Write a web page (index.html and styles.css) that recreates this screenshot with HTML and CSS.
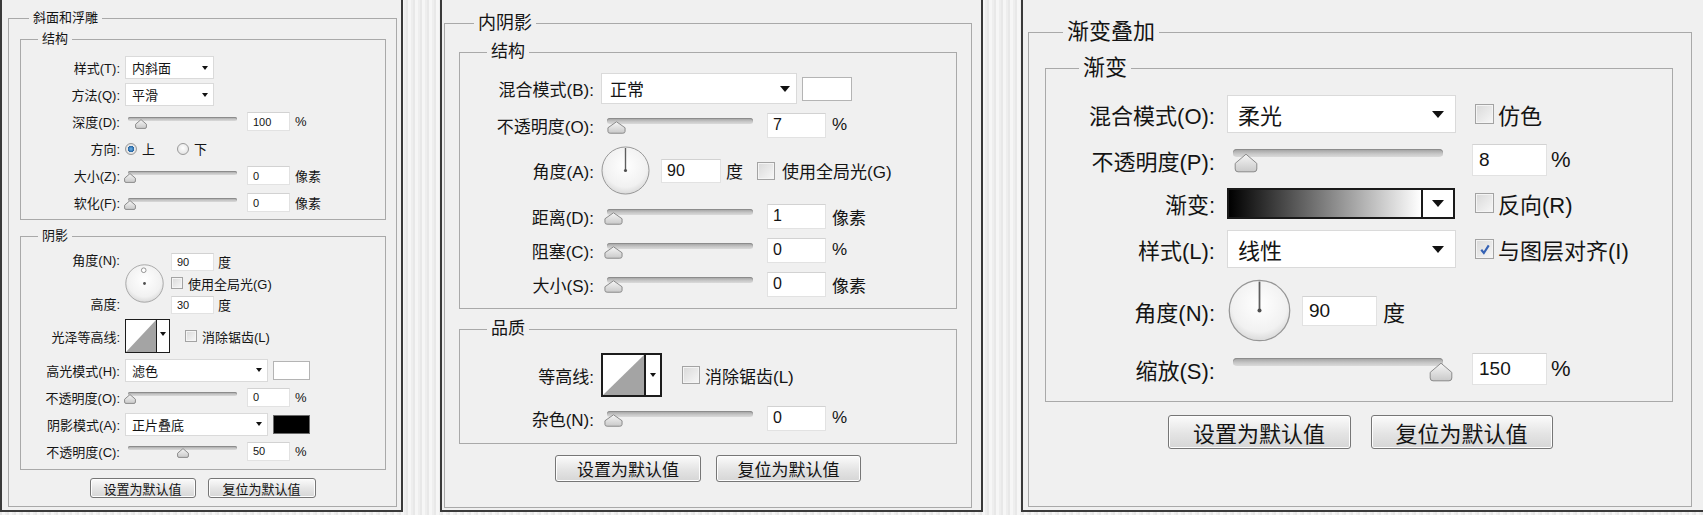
FILE: index.html
```html
<!DOCTYPE html>
<html lang="zh-CN">
  <head>
    <meta charset="UTF-8" />
    <title>图层样式</title>
    <link rel="stylesheet" href="styles.css">
  </head>
  <body>
    <div class="screen">

      <!-- 斜面和浮雕 -->
      <section class="panel p1">
        <fieldset class="group outer">
          <legend>斜面和浮雕</legend>
          <fieldset class="group inner">
            <legend>结构</legend>
            <div class="rows">
              <div class="row">
                <span class="lbl">样式(T):</span>
                <div class="select"><span>内斜面</span><i class="caret"></i></div>
              </div>
              <div class="row">
                <span class="lbl">方法(Q):</span>
                <div class="select"><span>平滑</span><i class="caret"></i></div>
              </div>
              <div class="row">
                <span class="lbl">深度(D):</span>
                <div class="slider"><div class="track"></div><svg class="thumb" style="left:11px" viewBox="0 0 12 10" preserveAspectRatio="none"><path d="M6 .6 11.4 5.2V8a1.4 1.4 0 0 1-1.4 1.4H2A1.4 1.4 0 0 1 .6 8V5.2Z"/></svg></div>
                <span class="num">100</span><span class="unit">%</span>
              </div>
              <div class="row">
                <span class="lbl">方向:</span>
                <span class="radio on"></span><span class="opt">上</span>
                <span class="radio"></span><span class="opt">下</span>
              </div>
              <div class="row">
                <span class="lbl">大小(Z):</span>
                <div class="slider"><div class="track"></div><svg class="thumb" style="left:0" viewBox="0 0 12 10" preserveAspectRatio="none"><path d="M6 .6 11.4 5.2V8a1.4 1.4 0 0 1-1.4 1.4H2A1.4 1.4 0 0 1 .6 8V5.2Z"/></svg></div>
                <span class="num">0</span><span class="unit">像素</span>
              </div>
              <div class="row">
                <span class="lbl">软化(F):</span>
                <div class="slider"><div class="track"></div><svg class="thumb" style="left:0" viewBox="0 0 12 10" preserveAspectRatio="none"><path d="M6 .6 11.4 5.2V8a1.4 1.4 0 0 1-1.4 1.4H2A1.4 1.4 0 0 1 .6 8V5.2Z"/></svg></div>
                <span class="num">0</span><span class="unit">像素</span>
              </div>
            </div>
          </fieldset>

          <fieldset class="group inner shadow">
            <legend>阴影</legend>
            <div class="rows">
              <div class="row angle">
                <div class="lbl stack"><span>角度(N):</span><span>高度:</span></div>
                <svg class="dial" viewBox="0 0 50 50"><circle cx="25" cy="25" r="24"/><circle class="ring" cx="24" cy="8" r="3"/><circle class="dot" cx="25" cy="25" r="1.8"/></svg>
                <div class="stack side">
                  <div class="line"><span class="num">90</span><span class="unit deg">度</span></div>
                  <div class="line"><span class="check"></span><span class="opt">使用全局光(G)</span></div>
                  <div class="line"><span class="num">30</span><span class="unit deg">度</span></div>
                </div>
              </div>
              <div class="row contour-row">
                <span class="lbl">光泽等高线:</span>
                <div class="contour"><svg class="curve" viewBox="0 0 10 10" preserveAspectRatio="none"><path d="M0 10 10 0V10Z"/></svg><div class="drop"><i class="caret"></i></div></div>
                <span class="check"></span><span class="opt">消除锯齿(L)</span>
              </div>
              <div class="row pick">
                <span class="lbl">高光模式(H):</span>
                <div class="select wide"><span>滤色</span><i class="caret"></i></div>
                <span class="swatch white"></span>
              </div>
              <div class="row">
                <span class="lbl">不透明度(O):</span>
                <div class="slider"><div class="track"></div><svg class="thumb" style="left:0" viewBox="0 0 12 10" preserveAspectRatio="none"><path d="M6 .6 11.4 5.2V8a1.4 1.4 0 0 1-1.4 1.4H2A1.4 1.4 0 0 1 .6 8V5.2Z"/></svg></div>
                <span class="num">0</span><span class="unit">%</span>
              </div>
              <div class="row pick">
                <span class="lbl">阴影模式(A):</span>
                <div class="select wide"><span>正片叠底</span><i class="caret"></i></div>
                <span class="swatch black"></span>
              </div>
              <div class="row">
                <span class="lbl">不透明度(C):</span>
                <div class="slider"><div class="track"></div><svg class="thumb" style="left:53px" viewBox="0 0 12 10" preserveAspectRatio="none"><path d="M6 .6 11.4 5.2V8a1.4 1.4 0 0 1-1.4 1.4H2A1.4 1.4 0 0 1 .6 8V5.2Z"/></svg></div>
                <span class="num">50</span><span class="unit">%</span>
              </div>
            </div>
          </fieldset>

          <div class="btns">
            <button class="btn set">设置为默认值</button>
            <button class="btn reset">复位为默认值</button>
          </div>
        </fieldset>
      </section>

      <!-- 内阴影 -->
      <section class="panel p2">
        <fieldset class="group outer">
          <legend>内阴影</legend>
          <fieldset class="group inner">
            <legend>结构</legend>
            <div class="rows">
              <div class="row pick">
                <span class="lbl">混合模式(B):</span>
                <div class="select"><span>正常</span><i class="caret"></i></div>
                <span class="swatch white"></span>
              </div>
              <div class="row">
                <span class="lbl">不透明度(O):</span>
                <div class="slider"><div class="track"></div><svg class="thumb" style="left:3px" viewBox="0 0 12 10" preserveAspectRatio="none"><path d="M6 .6 11.4 5.2V8a1.4 1.4 0 0 1-1.4 1.4H2A1.4 1.4 0 0 1 .6 8V5.2Z"/></svg></div>
                <span class="num">7</span><span class="unit">%</span>
              </div>
              <div class="row angle">
                <span class="lbl">角度(A):</span>
                <svg class="dial" viewBox="0 0 50 50"><circle cx="25" cy="25" r="24"/><line x1="25" y1="25" x2="25" y2="2"/><circle class="dot" cx="25" cy="25" r="1.6"/></svg>
                <span class="num">90</span><span class="unit deg">度</span>
                <span class="check"></span><span class="opt">使用全局光(G)</span>
              </div>
              <div class="row">
                <span class="lbl">距离(D):</span>
                <div class="slider"><div class="track"></div><svg class="thumb" style="left:0" viewBox="0 0 12 10" preserveAspectRatio="none"><path d="M6 .6 11.4 5.2V8a1.4 1.4 0 0 1-1.4 1.4H2A1.4 1.4 0 0 1 .6 8V5.2Z"/></svg></div>
                <span class="num">1</span><span class="unit">像素</span>
              </div>
              <div class="row">
                <span class="lbl">阻塞(C):</span>
                <div class="slider"><div class="track"></div><svg class="thumb" style="left:0" viewBox="0 0 12 10" preserveAspectRatio="none"><path d="M6 .6 11.4 5.2V8a1.4 1.4 0 0 1-1.4 1.4H2A1.4 1.4 0 0 1 .6 8V5.2Z"/></svg></div>
                <span class="num">0</span><span class="unit">%</span>
              </div>
              <div class="row">
                <span class="lbl">大小(S):</span>
                <div class="slider"><div class="track"></div><svg class="thumb" style="left:0" viewBox="0 0 12 10" preserveAspectRatio="none"><path d="M6 .6 11.4 5.2V8a1.4 1.4 0 0 1-1.4 1.4H2A1.4 1.4 0 0 1 .6 8V5.2Z"/></svg></div>
                <span class="num">0</span><span class="unit">像素</span>
              </div>
            </div>
          </fieldset>

          <fieldset class="group inner quality">
            <legend>品质</legend>
            <div class="rows">
              <div class="row contour-row">
                <span class="lbl">等高线:</span>
                <div class="contour"><svg class="curve" viewBox="0 0 10 10" preserveAspectRatio="none"><path d="M0 10 10 0V10Z"/></svg><div class="drop"><i class="caret"></i></div></div>
                <span class="check"></span><span class="opt">消除锯齿(L)</span>
              </div>
              <div class="row">
                <span class="lbl">杂色(N):</span>
                <div class="slider"><div class="track"></div><svg class="thumb" style="left:0" viewBox="0 0 12 10" preserveAspectRatio="none"><path d="M6 .6 11.4 5.2V8a1.4 1.4 0 0 1-1.4 1.4H2A1.4 1.4 0 0 1 .6 8V5.2Z"/></svg></div>
                <span class="num">0</span><span class="unit">%</span>
              </div>
            </div>
          </fieldset>

          <div class="btns">
            <button class="btn set">设置为默认值</button>
            <button class="btn reset">复位为默认值</button>
          </div>
        </fieldset>
      </section>

      <!-- 渐变叠加 -->
      <section class="panel p3">
        <fieldset class="group outer">
          <legend>渐变叠加</legend>
          <fieldset class="group inner">
            <legend>渐变</legend>
            <div class="rows">
              <div class="row pick">
                <span class="lbl">混合模式(O):</span>
                <div class="select"><span>柔光</span><i class="caret"></i></div>
                <span class="check"></span><span class="opt">仿色</span>
              </div>
              <div class="row">
                <span class="lbl">不透明度(P):</span>
                <div class="slider"><div class="track"></div><svg class="thumb" style="left:4px" viewBox="0 0 12 10" preserveAspectRatio="none"><path d="M6 .6 11.4 5.2V8a1.4 1.4 0 0 1-1.4 1.4H2A1.4 1.4 0 0 1 .6 8V5.2Z"/></svg></div>
                <span class="num">8</span><span class="unit">%</span>
              </div>
              <div class="row">
                <span class="lbl">渐变:</span>
                <div class="gradbar"><div class="ramp"></div><div class="drop"><i class="caret"></i></div></div>
                <span class="check"></span><span class="opt">反向(R)</span>
              </div>
              <div class="row pick">
                <span class="lbl">样式(L):</span>
                <div class="select"><span>线性</span><i class="caret"></i></div>
                <span class="check on"><svg viewBox="0 0 10 10"><path d="M2.4 5.4 4.3 7.8 7.9 2.2"/></svg></span><span class="opt">与图层对齐(I)</span>
              </div>
              <div class="row angle">
                <span class="lbl">角度(N):</span>
                <svg class="dial" viewBox="0 0 50 50"><circle cx="25" cy="25" r="24"/><line x1="25" y1="25" x2="25" y2="2"/><circle class="dot" cx="25" cy="25" r="1.6"/></svg>
                <span class="num">90</span><span class="unit deg">度</span>
              </div>
              <div class="row">
                <span class="lbl">缩放(S):</span>
                <div class="slider"><div class="track"></div><svg class="thumb" style="left:199px" viewBox="0 0 12 10" preserveAspectRatio="none"><path d="M6 .6 11.4 5.2V8a1.4 1.4 0 0 1-1.4 1.4H2A1.4 1.4 0 0 1 .6 8V5.2Z"/></svg></div>
                <span class="num">150</span><span class="unit">%</span>
              </div>
            </div>
          </fieldset>

          <div class="btns">
            <button class="btn set">设置为默认值</button>
            <button class="btn reset">复位为默认值</button>
          </div>
        </fieldset>
      </section>
    </div>

    <svg class="defs" aria-hidden="true">
      <defs>
        <linearGradient id="thumbFill" x1="0" y1="0" x2="0" y2="1">
          <stop offset="0" stop-color="#f6f6f6"/>
          <stop offset="1" stop-color="#c9c9c9"/>
        </linearGradient>
        <radialGradient id="dialFill" cx="0.5" cy="0.4" r="0.65">
          <stop offset="0" stop-color="#ffffff"/>
          <stop offset="0.7" stop-color="#f1f1f1"/>
          <stop offset="1" stop-color="#d2d2d2"/>
        </radialGradient>
      </defs>
    </svg>
  </body>
</html>
```

FILE: styles.css
```css
body {
  margin: 0;
  height: 515px;
  overflow: hidden;
  font-family: "Liberation Sans", "Noto Sans CJK SC", sans-serif;
  color: #141414;
  background: repeating-linear-gradient(90deg, #e8e8e8 0 2px, #f6f6f6 2px 5px, #eeeeee 5px 7px);
}
.screen {
  display: flex;
  align-items: flex-start;
}
.defs {
  position: absolute;
  width: 0;
  height: 0;
}

/* dialog panels */
.panel {
  box-sizing: border-box;
  height: 512px;
  display: flex;
  flex-direction: column;
  background: #f0f0f0;
  border: 2px solid #3a3a3a;
  border-top: 0;
}
.group {
  margin: 0;
  padding: 0;
  min-width: 0;
  border: 1px solid #a9a9a9;
}
.group > legend {
  padding: 0 4px;
}
.outer {
  flex: 1;
}
.rows {
  display: flex;
  flex-direction: column;
}
.row {
  display: flex;
  align-items: center;
  white-space: nowrap;
}
.lbl {
  flex: none;
  text-align: right;
}
.stack {
  display: flex;
  flex-direction: column;
  justify-content: space-between;
  align-self: stretch;
}
.lbl.stack {
  align-items: flex-end;
}
.line {
  display: flex;
  align-items: center;
}

/* controls */
.select {
  box-sizing: border-box;
  display: flex;
  align-items: center;
  justify-content: space-between;
  background: #fff;
  border: 1px solid #dadada;
}
.caret {
  width: 0;
  height: 0;
  border-style: solid;
  border-color: #111 transparent transparent;
}
.slider {
  position: relative;
  flex: none;
}
.track {
  border-radius: 4px;
  background: linear-gradient(#9d9d9d, #c7c7c7 60%, #dadada);
  box-shadow: inset 0 1px 0 #8c8c8c;
}
.thumb {
  position: absolute;
  display: block;
}
.thumb path {
  fill: url(#thumbFill);
  stroke: #8b8b8b;
  stroke-width: 1;
  vector-effect: non-scaling-stroke;
}
.num {
  box-sizing: border-box;
  flex: none;
  display: flex;
  align-items: center;
  background: #fff;
  border: 1px solid #e2e2e2;
  border-top-color: #d2d2d2;
}
.check {
  box-sizing: border-box;
  flex: none;
  display: flex;
  align-items: center;
  justify-content: center;
  border: 1px solid #a3a3a3;
  background: linear-gradient(135deg, #d9d9d9, #f7f7f7);
  box-shadow: inset 0 0 0 1px #f4f4f4;
}
.check svg {
  width: 80%;
  height: 80%;
}
.check path {
  fill: none;
  stroke: #3562b4;
  stroke-width: 1.6;
}
.radio {
  box-sizing: border-box;
  flex: none;
  border-radius: 50%;
  border: 1px solid #9a9a9a;
  background: radial-gradient(circle at 50% 40%, #ffffff, #dcdcdc);
}
.radio.on {
  background: radial-gradient(circle, #6fb2e6 0, #1f5f9e 45%, #e8e8e8 50%, #d6d6d6 100%);
}
.swatch {
  box-sizing: border-box;
  flex: none;
  border: 1px solid #b4b4b4;
}
.swatch.white {
  background: #fff;
}
.swatch.black {
  background: #000;
  border-color: #6a6a6a;
}
.dial {
  flex: none;
  display: block;
}
.dial circle {
  fill: url(#dialFill);
  stroke: #969696;
  stroke-width: 1;
}
.dial line {
  stroke: #5e5e5e;
  stroke-width: 1.4;
}
.dial .dot {
  fill: #4e4e4e;
  stroke: none;
}
.dial .ring {
  fill: #fff;
  stroke: #7a7a7a;
}
.contour {
  box-sizing: border-box;
  flex: none;
  display: flex;
  background: #fff;
  border: 1px solid #1c1c1c;
}
.curve {
  flex: 1;
  display: block;
  height: 100%;
}
.curve path {
  fill: #a4a4a4;
}
.contour .drop {
  display: flex;
  justify-content: center;
  border-left: 1px solid #1c1c1c;
}
.gradbar {
  box-sizing: border-box;
  flex: none;
  display: flex;
  border: 2px solid #1a1a1a;
  background: #fff;
}
.ramp {
  flex: 1;
  background: linear-gradient(90deg, #000, #fff);
}
.gradbar .drop {
  display: flex;
  align-items: center;
  justify-content: center;
  border-left: 2px solid #1a1a1a;
}
.btns {
  display: flex;
  justify-content: center;
}
.btn {
  box-sizing: border-box;
  padding: 0;
  font: inherit;
  color: #141414;
  border: 1px solid #767676;
  border-radius: 3px;
  background: linear-gradient(#fbfbfb, #e4e4e4 55%, #d6d6d6);
  box-shadow: inset 0 0 0 1px #fdfdfd;
}

/* panel 1: 斜面和浮雕 */
.p1 {
  width: 403px;
  padding: 10px 4px 3px 6px;
  font-size: 13px;
}
.p1 legend {
  line-height: 16px;
}
.p1 .outer > legend {
  margin-left: 20px;
}
.p1 .inner {
  margin: 5px 10px 0 11px;
}
.p1 .inner + .inner {
  margin-top: 8px;
}
.p1 .inner > legend {
  margin-left: 17px;
}
.p1 .rows {
  padding: 9px 0 5px;
  gap: 4px;
}
.p1 .row {
  height: 23px;
}
.p1 .lbl {
  width: 99px;
  margin-right: 5px;
}
.p1 .select {
  width: 89px;
  height: 23px;
  padding: 0 5px 0 6px;
}
.p1 .select.wide {
  width: 143px;
}
.p1 .caret {
  border-width: 4px 3.5px 0;
}
.p1 .slider {
  width: 117px;
  height: 14px;
  margin-left: -1px;
}
.p1 .track {
  height: 4px;
  margin: 2px 4px 0;
}
.p1 .thumb {
  top: 4px;
  width: 12px;
  height: 10px;
}
.p1 .num {
  width: 43px;
  height: 19px;
  margin-left: 6px;
  padding-left: 5px;
  font-size: 11px;
}
.p1 .unit {
  margin-left: 5px;
}
.p1 .radio {
  width: 12px;
  height: 12px;
}
.p1 .radio + .opt {
  margin-left: 5px;
  margin-right: 22px;
}
.p1 .shadow .rows {
  padding: 8px 0;
  gap: 5px;
}
.p1 .shadow .row {
  height: 20px;
}
.p1 .shadow .pick {
  height: 24px;
}
.p1 .shadow .angle {
  height: 62px;
}
.p1 .shadow .contour-row {
  height: 34px;
}
.p1 .stack > span {
  line-height: 18px;
}
.p1 .dial {
  width: 39px;
  height: 39px;
}
.p1 .side {
  margin-left: 7px;
}
.p1 .side .num {
  margin-left: 0;
  height: 18px;
}
.p1 .unit.deg {
  margin-left: 4px;
}
.p1 .check {
  width: 12px;
  height: 12px;
}
.p1 .check + .opt {
  margin-left: 5px;
}
.p1 .contour {
  width: 45px;
  height: 34px;
  margin-right: 15px;
}
.p1 .contour .drop {
  width: 12px;
  padding-top: 12px;
}
.p1 .swatch {
  width: 37px;
  height: 19px;
  margin-left: 5px;
}
.p1 .btns {
  margin-top: 8px;
  gap: 12px;
}
.p1 .btn {
  height: 20px;
  width: 106px;
}
.p1 .btn.reset {
  width: 108px;
}

/* panel 2: 内阴影 */
.p2 {
  width: 543px;
  margin-left: 37px;
  padding: 12px 9px 2px 2px;
  font-size: 17px;
}
.p2 legend {
  line-height: 22px;
}
.p2 .outer > legend {
  margin-left: 29px;
  font-size: 18px;
}
.p2 .inner {
  margin: 7px 14px 0;
}
.p2 .inner + .inner {
  margin-top: 9px;
}
.p2 .inner > legend {
  margin-left: 27px;
}
.p2 .rows {
  padding: 10px 0 11px;
  gap: 8px;
}
.p2 .quality .rows {
  padding: 13px 0 12px;
}
.p2 .row {
  height: 26px;
}
.p2 .pick {
  height: 31px;
}
.p2 .angle {
  height: 49px;
}
.p2 .contour-row {
  height: 44px;
}
.p2 .lbl {
  width: 134px;
  margin-right: 7px;
}
.p2 .select {
  width: 196px;
  height: 31px;
  padding: 0 6px 0 8px;
}
.p2 .caret {
  border-width: 6px 5px 0;
}
.p2 .swatch {
  width: 50px;
  height: 24px;
  margin-left: 5px;
}
.p2 .slider {
  width: 152px;
  height: 18px;
  margin-left: 3px;
}
.p2 .track {
  height: 6px;
  margin: 2px 3px 0;
}
.p2 .thumb {
  top: 5px;
  width: 19px;
  height: 13px;
}
.p2 .num {
  width: 59px;
  height: 25px;
  margin-left: 11px;
  padding-left: 5px;
  font-size: 16px;
}
.p2 .unit {
  margin-left: 6px;
}
.p2 .dial {
  width: 49px;
  height: 49px;
}
.p2 .angle .num {
  width: 60px;
  height: 24px;
}
.p2 .unit.deg {
  margin-left: 5px;
  margin-right: 14px;
}
.p2 .check {
  width: 18px;
  height: 18px;
}
.p2 .check + .opt {
  margin-left: 7px;
}
.p2 .contour {
  width: 61px;
  height: 44px;
  margin-right: 20px;
  border-width: 2px;
}
.p2 .contour .drop {
  width: 14px;
  align-items: center;
  border-left-width: 2px;
}
.p2 .contour .caret {
  border-width: 4px 3px 0;
}
.p2 .contour-row .check + .opt {
  margin-left: 5px;
}
.p2 .btns {
  margin-top: 11px;
  gap: 15px;
}
.p2 .btn {
  height: 27px;
  width: 146px;
}
.p2 .btn.reset {
  width: 145px;
}

/* panel 3: 渐变叠加 */
.p3 {
  width: 682px;
  margin-left: 38px;
  padding: 18px 11px 3px 5px;
  border-right: 0;
  font-size: 22px;
}
.p3 legend {
  line-height: 28px;
}
.p3 .outer > legend {
  margin-left: 34px;
}
.p3 .inner {
  margin: 8px 18px 0 16px;
}
.p3 .inner > legend {
  margin-left: 33px;
}
.p3 .rows {
  padding: 13px 0 16px;
  gap: 11px;
}
.p3 .row {
  height: 32px;
}
.p3 .pick {
  height: 38px;
}
.p3 .angle {
  height: 63px;
}
.p3 .lbl {
  width: 169px;
  margin-right: 12px;
}
.p3 .select {
  width: 229px;
  height: 38px;
  padding: 0 11px 0 10px;
}
.p3 .caret {
  border-width: 7px 6px 0;
}
.p3 .check {
  width: 19px;
  height: 20px;
  margin-left: 19px;
}
.p3 .check + .opt {
  margin-left: 4px;
}
.p3 .slider {
  width: 223px;
  height: 26px;
  margin-left: 3px;
}
.p3 .track {
  height: 8px;
  margin: 2px 10px 0 3px;
}
.p3 .thumb {
  top: 6px;
  width: 24px;
  height: 20px;
}
.p3 .num {
  width: 75px;
  height: 32px;
  margin-left: 19px;
  padding-left: 6px;
  font-size: 19px;
}
.p3 .unit {
  margin-left: 4px;
}
.p3 .gradbar {
  width: 228px;
  height: 31px;
}
.p3 .gradbar .drop {
  width: 30px;
}
.p3 .gradbar + .check {
  margin-left: 20px;
}
.p3 .dial {
  width: 63px;
  height: 63px;
  margin-left: 1px;
}
.p3 .angle .num {
  height: 30px;
  margin-left: 11px;
}
.p3 .unit.deg {
  margin-left: 6px;
}
.p3 .btns {
  margin-top: 13px;
  gap: 20px;
}
.p3 .btn {
  height: 34px;
  width: 183px;
}
.p3 .btn.reset {
  width: 182px;
}
```
